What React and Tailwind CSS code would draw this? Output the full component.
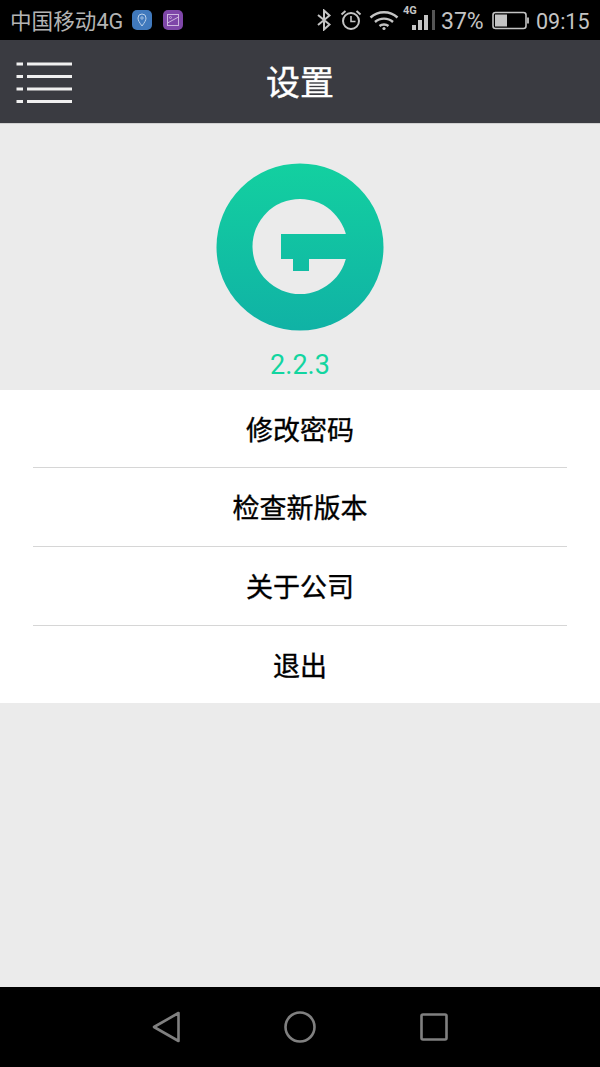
import React from "react";

const SANS = "font-['Roboto','Noto_Sans_CJK_SC',sans-serif]";

function Logo() {
  return (
    <svg width="168" height="168" viewBox="216 163 168 168" className="block">
      <defs>
        <linearGradient id="lg" gradientUnits="userSpaceOnUse" x1="0" y1="163" x2="0" y2="331">
          <stop offset="0" stopColor="#13d0a0" />
          <stop offset="1" stopColor="#10b2a5" />
        </linearGradient>
      </defs>
      <circle cx="300" cy="247" r="83.5" fill="url(#lg)" />
      <circle cx="300" cy="246.5" r="47.5" fill="#ebebeb" />
      <path d="M281 234H350V259H309V271H293V259H281Z" fill="url(#lg)" />
    </svg>
  );
}

function Menu() {
  return (
    <svg width="58" height="44" viewBox="0 0 58 44" className="block">
      {[1.5, 14, 26.5, 39].map((y) => (
        <g key={y} fill="#f0f0f0">
          <rect x="1.5" y={y} width="6.5" height="3" />
          <rect x="12" y={y} width="45" height="3" />
        </g>
      ))}
    </svg>
  );
}

function StatusRight() {
  const c = "#c4c4c4";
  return (
    <>
      <svg width="16" height="22" viewBox="0 0 16 22" className="absolute left-[316px] top-[9px]" fill="none" stroke={c} strokeWidth="2">
        <path d="M2 6L13.5 15.5L8 20.5V1.5L13.5 6.5L2 16" />
      </svg>
      <svg width="22" height="22" viewBox="0 0 22 22" className="absolute left-[340px] top-[9px]" fill="none" stroke={c} strokeWidth="2">
        <circle cx="11" cy="12" r="8" />
        <path d="M11 7V12.5H15.5" strokeWidth="1.6" />
        <path d="M1.5 5.5L5.5 2M20.5 5.5L16.5 2" />
      </svg>
      <svg width="30" height="22" viewBox="0 0 30 22" className="absolute left-[369px] top-[9px]" fill="none" stroke={c} strokeWidth="2.4">
        <path d="M1.5 8.5C9 1.5 21 1.5 28.5 8.5" />
        <path d="M6 13C11 8.5 19 8.5 24 13" />
        <path d="M10.5 17C13 15 17 15 19.5 17" />
        <circle cx="15" cy="19.5" r="1.6" fill={c} stroke="none" />
      </svg>
      <span className="absolute left-[403px] top-[5px] text-[11px] font-bold leading-[12px] text-[#c4c4c4]">4G</span>
      <svg width="24" height="24" viewBox="0 0 24 24" className="absolute left-[412px] top-[7px]">
        <rect x="0" y="18" width="4" height="5" fill={c} />
        <rect x="6" y="13" width="4" height="10" fill={c} />
        <rect x="12" y="8" width="4" height="15" fill={c} />
        <rect x="20" y="3" width="3" height="20" fill="#555" />
      </svg>
      <span className="absolute left-[441px] top-[9px] text-[23px] leading-[26px] text-[#c4c4c4]">37%</span>
      <svg width="38" height="20" viewBox="0 0 38 20" className="absolute left-[491px] top-[11px]" fill="none">
        <rect x="2" y="1.5" width="33" height="16" rx="2.5" stroke={c} strokeWidth="1.6" />
        <rect x="4" y="3.5" width="12" height="12" fill={c} />
        <path d="M37 6.5V12.5" stroke={c} strokeWidth="1.8" />
      </svg>
      <span className="absolute left-[536px] top-[10px] text-[21.5px] leading-[24px] text-[#c4c4c4]">09:15</span>
    </>
  );
}

function Row({ label, h, last }) {
  return (
    <div className="px-[33px]">
      <div className={`${h} pt-[5px] flex items-center justify-center text-[27px] text-black [-webkit-text-stroke:0.35px_black] ${last ? "" : "border-b border-[#d6d6d6]"}`}>
        {label}
      </div>
    </div>
  );
}

export default function App() {
  return (
    <div className={`w-[600px] h-[1067px] flex flex-col bg-[#ebebeb] overflow-hidden ${SANS}`}>
      <div className="h-[40px] bg-black relative shrink-0">
        <span className="absolute left-[10px] top-[9px] text-[21.6px] leading-[26px] text-[#b4b4b4]">中国移动4G</span>
        <svg width="20" height="20" viewBox="0 0 20 20" className="absolute left-[132px] top-[10px]">
          <rect width="20" height="20" rx="5" fill="#4079bd" />
          <path d="M10 16C7.5 12.5 6 10.5 6 8A4 4 0 0 1 14 8C14 10.5 12.5 12.5 10 16Z" fill="none" stroke="#bcd2ea" strokeWidth="1" />
          <circle cx="10" cy="8" r="1.2" fill="none" stroke="#bcd2ea" strokeWidth="0.8" />
        </svg>
        <svg width="20" height="20" viewBox="0 0 20 20" className="absolute left-[163px] top-[10px]">
          <rect width="20" height="20" rx="5" fill="#7e46a8" />
          <rect x="4.5" y="4.5" width="11" height="11" fill="none" stroke="#cdb6de" strokeWidth="1" />
          <path d="M4.5 13L15.5 7" stroke="#cdb6de" strokeWidth="1" />
          <circle cx="7.5" cy="7.5" r="1" fill="none" stroke="#cdb6de" strokeWidth="0.8" />
        </svg>
        <StatusRight />
      </div>

      <div className="h-[84px] shrink-0 bg-[#3a3b41] border-b border-[#d0d0d0] relative flex items-center justify-center">
        <span className="text-[34px] text-white leading-none mt-[2px] [-webkit-text-stroke:0.4px_white]">设置</span>
        <div className="absolute left-[15px] top-[21px]">
          <Menu />
        </div>
      </div>

      <div className="flex flex-col items-center pt-[39px] h-[266px] shrink-0">
        <Logo />
        <div className="mt-[18px] text-[27px] leading-[32px] text-[#12d5a0]">2.2.3</div>
      </div>

      <div className="bg-white h-[313px] shrink-0">
        <Row label="修改密码" h="h-[78px]" />
        <Row label="检查新版本" h="h-[79px]" />
        <Row label="关于公司" h="h-[79px]" />
        <Row label="退出" h="h-[77px]" last />
      </div>

      <div className="flex-1" />

      <div className="h-[80px] bg-black shrink-0 flex items-center justify-center gap-[104px] pb-[1px] pr-[1px]">
        <svg width="28" height="32" viewBox="0 0 28 32" fill="none" stroke="#808080" strokeWidth="2.6" strokeLinejoin="round">
          <path d="M2 16L26.5 2V30Z" />
        </svg>
        <svg width="32" height="32" viewBox="0 0 32 32" fill="none" stroke="#808080" strokeWidth="2.6">
          <circle cx="16" cy="16" r="14.5" />
        </svg>
        <svg width="28" height="28" viewBox="0 0 28 28" fill="none" stroke="#808080" strokeWidth="2.6" strokeLinejoin="round">
          <rect x="1.5" y="1.5" width="25" height="25" rx="1.5" />
        </svg>
      </div>
    </div>
  );
}
